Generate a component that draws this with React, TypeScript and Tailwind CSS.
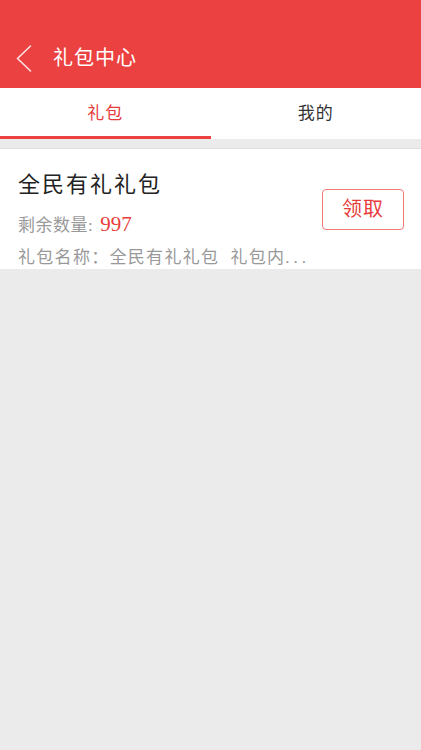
import { useState } from 'react';

const tabs = ['礼包', '我的'];

export default function App() {
  const [active, setActive] = useState(0);

  return (
    <div className="min-h-[750px] bg-[#ebebeb] font-['Liberation_Serif','Noto_Sans_CJK_SC',serif]">
      {/* header */}
      <div className="h-[88px] bg-[#eb4141] pt-[28px]">
        <div className="h-[60px] flex items-center pl-[16px]">
          <svg width="16" height="27" viewBox="0 0 16 27" fill="none">
            <polyline points="14.5,1 1.5,13.5 14.5,26" stroke="#fde3e3" strokeWidth="1.6" strokeLinecap="round" strokeLinejoin="round" />
          </svg>
          <span className="ml-[21px] text-[20px] tracking-[1px] text-white leading-none">礼包中心</span>
        </div>
      </div>

      {/* tabs */}
      <div className="flex bg-white">
        {tabs.map((t, i) => (
          <button
            key={t}
            onClick={() => setActive(i)}
            className={
              i === active
                ? 'flex-1 h-[51px] pt-[4px] border-b-[3px] border-[#eb4141] text-[#e63c3c] text-[17px] tracking-[1px]'
                : 'flex-1 h-[51px] pt-[4px] border-b-[3px] border-transparent text-[#333] text-[17px] tracking-[1px]'
            }
          >
            {t}
          </button>
        ))}
      </div>

      {/* gift card */}
      <div className="mt-[9px] border-t border-[#dedede] bg-white flex items-center h-[121px]">
        <div className="flex-1 min-w-0 pl-[18px] self-start pt-[21px]">
          <div className="text-[22px] leading-[30px] tracking-[2px] text-[#222]">全民有礼礼包</div>
          <div className="mt-[12px] h-[24px] flex items-baseline leading-[24px]">
            <span className="text-[17px] tracking-[0.5px] text-[#999]">剩余数量:</span>
            <span className="ml-[7px] text-[21px] text-[#e83c3c]">997</span>
          </div>
          <div className="mt-[10px] whitespace-nowrap text-[17px] leading-[24px] tracking-[1.3px] text-[#999]">
            礼包名称：全民有礼礼包&nbsp;&nbsp;礼包内<span className="tracking-[4px]">...</span>
          </div>
        </div>
        <button className="mr-[17px] w-[82px] h-[41px] rounded-[4px] border border-[#f07a7a] text-[20px] tracking-[1px] text-[#e83c3c]">
          领取
        </button>
      </div>
    </div>
  );
}
